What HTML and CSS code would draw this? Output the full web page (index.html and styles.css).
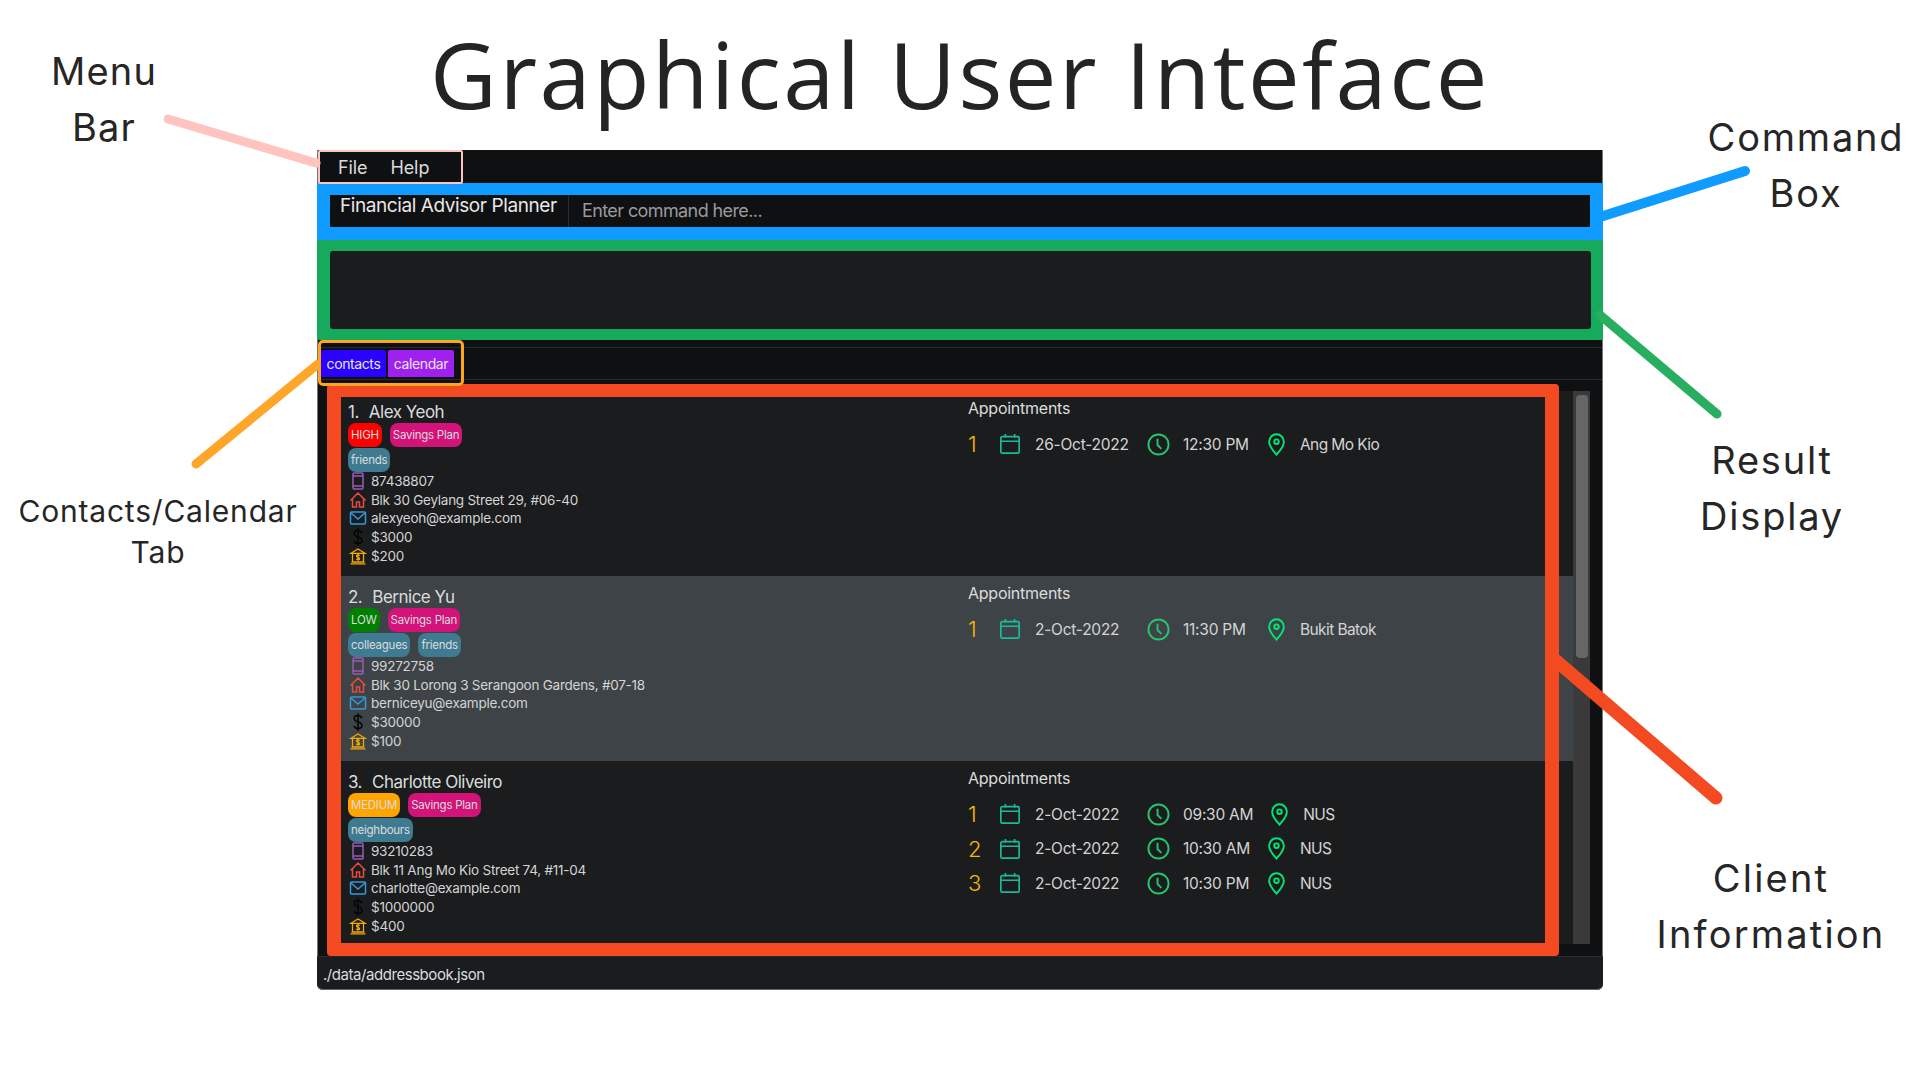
FILE: index.html
```html
<!DOCTYPE html>
<html lang="en">
<head>
    <meta charset="UTF-8">
    <meta name="viewport" content="width=device-width, initial-scale=1.0">
    <title>Graphical User Inteface</title>
    <link rel="stylesheet" href="styles.css">
</head>
<body>
    <svg class="defs" width="0" height="0">
        <symbol id="i-phone" viewBox="0 0 18 18"><rect x="4" y="1" width="10" height="16" rx="1"/><path d="M4 4h10M4 14h10"/></symbol>
        <symbol id="i-house" viewBox="0 0 18 18"><path d="M1.5 9.5 9 2l7.5 7.5M3.5 7.5V16h4v-5h3v5h4V7.5"/></symbol>
        <symbol id="i-mail" viewBox="0 0 18 18"><rect x="1.5" y="3" width="15" height="12" rx="1"/><path d="M2 4l7 6 7-6"/></symbol>
        <symbol id="i-dollar" viewBox="0 0 18 18"><path d="M12.8 5.2C12.2 3.3 10.8 2.6 9 2.6 6.6 2.6 5.2 3.8 5.2 5.6c0 4.4 7.8 2.4 7.8 7 0 1.9-1.6 2.9-4 2.9-2 0-3.4-1-4-2.6M9 .3v17.4"/></symbol>
        <symbol id="i-bank" viewBox="0 0 18 18"><path d="M2 6.3 9 2l7 4.3zM3.5 6.5V15M14.5 6.5V15M2.5 15h13M1.5 16.8h15M10.7 8.6C10.3 8 9.7 7.9 9 7.9c-1 0-1.6.5-1.6 1.2 0 1.6 3.2.9 3.2 2.6 0 .7-.7 1.1-1.6 1.1-.8 0-1.4-.3-1.7-1M9 7v6.8"/></symbol>
        <symbol id="i-cal" viewBox="0 0 24 24"><rect x="2" y="4" width="20" height="18" rx="1.5"/><path d="M2 9h20M7 1v4M17 1v4"/></symbol>
        <symbol id="i-clock" viewBox="0 0 24 24"><circle cx="12" cy="12" r="10.5"/><path d="M11 6v6.5l4 4"/></symbol>
        <symbol id="i-pin" viewBox="0 0 18 24"><path d="M9 1.2a7.8 7.8 0 0 1 7.8 7.8C16.8 14 9 22.8 9 22.8S1.2 14 1.2 9A7.8 7.8 0 0 1 9 1.2z"/><circle class="dot" cx="9" cy="9" r="2.4"/></symbol>
    </svg>

    <h1 class="page-title">Graphical User Inteface</h1>

    <div class="app">
        <div class="menubar">
            <div class="menu-frame">
                <span>File</span>
                <span>Help</span>
            </div>
        </div>

        <div class="command-band">
            <div class="command-box">
                <div class="app-name">Financial Advisor Planner</div>
                <div class="command-input">Enter command here...</div>
            </div>
        </div>

        <div class="result-band">
            <div class="result-display"></div>
        </div>

        <div class="tabbar">
            <div class="tab-strip"></div>
            <div class="tab-frame">
                <div class="tab tab-contacts">contacts</div>
                <div class="tab tab-calendar">calendar</div>
            </div>
        </div>

        <div class="list-area">
            <div class="client-list">
                <div class="client">
                    <div class="client-info">
                        <div class="client-name"><span class="client-index">1.</span>Alex Yeoh</div>
                        <div class="tags">
                            <span class="tag tag-high">HIGH</span>
                            <span class="tag tag-plan">Savings Plan</span>
                        </div>
                        <div class="tags">
                            <span class="tag tag-group">friends</span>
                        </div>
                        <div class="detail"><svg class="ic ic-phone"><use href="#i-phone"/></svg>87438807</div>
                        <div class="detail"><svg class="ic ic-house"><use href="#i-house"/></svg>Blk 30 Geylang Street 29, #06-40</div>
                        <div class="detail"><svg class="ic ic-mail"><use href="#i-mail"/></svg>alexyeoh@example.com</div>
                        <div class="detail"><svg class="ic ic-dollar"><use href="#i-dollar"/></svg>$3000</div>
                        <div class="detail"><svg class="ic ic-bank"><use href="#i-bank"/></svg>$200</div>
                    </div>
                    <div class="appts">
                        <div class="appts-title">Appointments</div>
                        <div class="appt">
                            <span class="appt-no">1</span>
                            <svg class="ic-cal"><use href="#i-cal"/></svg>
                            <span class="appt-date">26-Oct-2022</span>
                            <svg class="ic-clock"><use href="#i-clock"/></svg>
                            <span class="appt-time">12:30 PM</span>
                            <svg class="ic-pin"><use href="#i-pin"/></svg>
                            <span class="appt-place">Ang Mo Kio</span>
                        </div>
                    </div>
                </div>

                <div class="client client-alt">
                    <div class="client-info">
                        <div class="client-name"><span class="client-index">2.</span>Bernice Yu</div>
                        <div class="tags">
                            <span class="tag tag-low">LOW</span>
                            <span class="tag tag-plan">Savings Plan</span>
                        </div>
                        <div class="tags">
                            <span class="tag tag-group">colleagues</span>
                            <span class="tag tag-group">friends</span>
                        </div>
                        <div class="detail"><svg class="ic ic-phone"><use href="#i-phone"/></svg>99272758</div>
                        <div class="detail"><svg class="ic ic-house"><use href="#i-house"/></svg>Blk 30 Lorong 3 Serangoon Gardens, #07-18</div>
                        <div class="detail"><svg class="ic ic-mail"><use href="#i-mail"/></svg>berniceyu@example.com</div>
                        <div class="detail"><svg class="ic ic-dollar"><use href="#i-dollar"/></svg>$30000</div>
                        <div class="detail"><svg class="ic ic-bank"><use href="#i-bank"/></svg>$100</div>
                    </div>
                    <div class="appts">
                        <div class="appts-title">Appointments</div>
                        <div class="appt">
                            <span class="appt-no">1</span>
                            <svg class="ic-cal"><use href="#i-cal"/></svg>
                            <span class="appt-date">2-Oct-2022</span>
                            <svg class="ic-clock"><use href="#i-clock"/></svg>
                            <span class="appt-time">11:30 PM</span>
                            <svg class="ic-pin"><use href="#i-pin"/></svg>
                            <span class="appt-place">Bukit Batok</span>
                        </div>
                    </div>
                </div>

                <div class="client client-last">
                    <div class="client-info">
                        <div class="client-name"><span class="client-index">3.</span>Charlotte Oliveiro</div>
                        <div class="tags">
                            <span class="tag tag-medium">MEDIUM</span>
                            <span class="tag tag-plan">Savings Plan</span>
                        </div>
                        <div class="tags">
                            <span class="tag tag-group">neighbours</span>
                        </div>
                        <div class="detail"><svg class="ic ic-phone"><use href="#i-phone"/></svg>93210283</div>
                        <div class="detail"><svg class="ic ic-house"><use href="#i-house"/></svg>Blk 11 Ang Mo Kio Street 74, #11-04</div>
                        <div class="detail"><svg class="ic ic-mail"><use href="#i-mail"/></svg>charlotte@example.com</div>
                        <div class="detail"><svg class="ic ic-dollar"><use href="#i-dollar"/></svg>$1000000</div>
                        <div class="detail"><svg class="ic ic-bank"><use href="#i-bank"/></svg>$400</div>
                    </div>
                    <div class="appts">
                        <div class="appts-title">Appointments</div>
                        <div class="appt">
                            <span class="appt-no">1</span>
                            <svg class="ic-cal"><use href="#i-cal"/></svg>
                            <span class="appt-date">2-Oct-2022</span>
                            <svg class="ic-clock"><use href="#i-clock"/></svg>
                            <span class="appt-time">09:30 AM</span>
                            <svg class="ic-pin"><use href="#i-pin"/></svg>
                            <span class="appt-place">NUS</span>
                        </div>
                        <div class="appt">
                            <span class="appt-no">2</span>
                            <svg class="ic-cal"><use href="#i-cal"/></svg>
                            <span class="appt-date">2-Oct-2022</span>
                            <svg class="ic-clock"><use href="#i-clock"/></svg>
                            <span class="appt-time">10:30 AM</span>
                            <svg class="ic-pin"><use href="#i-pin"/></svg>
                            <span class="appt-place">NUS</span>
                        </div>
                        <div class="appt">
                            <span class="appt-no">3</span>
                            <svg class="ic-cal"><use href="#i-cal"/></svg>
                            <span class="appt-date">2-Oct-2022</span>
                            <svg class="ic-clock"><use href="#i-clock"/></svg>
                            <span class="appt-time">10:30 PM</span>
                            <svg class="ic-pin"><use href="#i-pin"/></svg>
                            <span class="appt-place">NUS</span>
                        </div>
                    </div>
                </div>
            </div>

            <div class="scrollbar">
                <div class="scroll-thumb"></div>
            </div>

            <div class="client-frame"></div>
        </div>

        <div class="statusbar">./data/addressbook.json</div>
    </div>

    <!-- callout lines and labels around the window -->
    <svg class="callouts" viewBox="0 0 1920 1080">
        <line class="line-menu" x1="168" y1="119" x2="316" y2="163"/>
        <line class="line-command" x1="1600" y1="217" x2="1745" y2="171"/>
        <line class="line-result" x1="1600" y1="315" x2="1717" y2="414"/>
        <line class="line-tab" x1="196" y1="464" x2="318" y2="364"/>
        <line class="line-client" x1="1553" y1="658" x2="1716" y2="798"/>
    </svg>

    <div class="label label-menu">Menu<br>Bar</div>
    <div class="label label-command">Command<br>Box</div>
    <div class="label label-result">Result<br>Display</div>
    <div class="label label-tab">Contacts/Calendar<br>Tab</div>
    <div class="label label-client">Client<br>Information</div>
</body>
</html>
```

FILE: styles.css
```css
*, *::before, *::after {
    box-sizing: border-box;
}

html, body {
    margin: 0;
    height: 1080px;
    overflow: hidden;
    background-color: #fff;
}

body {
    position: relative;
    font-family: "Inter", "Liberation Sans", sans-serif;
    color: #dcdcdc;
}

.defs {
    position: absolute;
}

.page-title {
    height: 150px;
    margin: 0;
    padding-top: 14px;
    text-align: center;
    font: 400 92px/120px "Open Sans", sans-serif;
    letter-spacing: 2.5px;
    color: #242424;
}

/* window */
.app {
    position: relative;
    display: flex;
    flex-direction: column;
    width: 1286px;
    height: 840px;
    margin-left: 317px;
    background-color: #0f1012;
    box-shadow: inset 1px 0 #777, inset -1px 0 #777;
    border-radius: 0 0 6px 6px;
}

.menubar {
    height: 33px;
    padding-left: 1px;
}

.menu-frame {
    display: flex;
    align-items: center;
    gap: 23px;
    width: 145px;
    height: 34px;
    padding-left: 18px;
    border: 2px solid #ffc4bf;
    border-radius: 2px;
    font-size: 18px;
    letter-spacing: -0.1px;
    position: relative;
}

.command-band {
    width: 1286px;
    height: 57px;
    padding: 12px 13px 13px;
    background-color: #0f9bff;
}

.command-box {
    display: flex;
    height: 32px;
    background-color: #0f1012;
    font-size: 18px;
}

.app-name {
    width: 239px;
    padding-left: 10px;
    border-right: 1px solid #2b2b2b;
    color: #e8e8e8;
    font-size: 19px;
    line-height: 22px;
    letter-spacing: -0.42px;
    white-space: nowrap;
}

.command-input {
    flex: 1;
    padding-left: 13px;
    line-height: 32px;
    letter-spacing: -0.6px;
    color: #9a9a9a;
}

.result-band {
    height: 100px;
    padding: 11px 12px 11px 13px;
    background-color: #16ab5c;
    border-radius: 0 0 2px 2px;
}

.result-display {
    height: 78px;
    background-color: #1b1c1e;
    border-radius: 3px;
}

.tabbar {
    position: relative;
    z-index: 1;
    height: 44px;
    padding-top: 7px;
}

.tab-strip {
    height: 33px;
    border-block: 1px solid #2a2a2c;
    margin-inline: 1px;
}

.tab-frame {
    position: absolute;
    top: 0;
    left: 1px;
    display: flex;
    gap: 2px;
    width: 146px;
    height: 46px;
    padding: 7px 0 0;
    border: 3px solid #ffa51f;
    border-radius: 5px;
}

.tab {
    width: 65px;
    height: 27px;
    border-radius: 2px 2px 0 0;
    color: #e6e6e6;
    font-size: 14px;
    letter-spacing: -0.4px;
    line-height: 27px;
    text-align: center;
}

.tab-contacts {
    background-color: #2a00ff;
}

.tab-calendar {
    width: 66px;
    background-color: #a020f0;
}

/* client list */
.list-area {
    position: relative;
    display: flex;
    flex: 1;
    padding: 7px 13px 12px 10px;
    min-height: 0;
}

.client-list {
    flex: 1;
    overflow: hidden;
}

.client {
    display: flex;
    height: 185px;
    padding: 10px 0 0 21px;
    background-color: #1b1c1e;
}

.client-alt {
    background-color: #3e4347;
}

.client-last {
    height: 183px;
}

.client-info {
    width: 620px;
}

.client-name {
    height: 22px;
    font-size: 17px;
    line-height: 22px;
    letter-spacing: -0.5px;
}

.client-index {
    margin-right: 10px;
}

.tags {
    display: flex;
    gap: 8px;
    height: 24px;
    margin-bottom: 1px;
}

.tags + .tags {
    margin-bottom: -0.5px;
}

.tag {
    height: 24px;
    padding-inline: 3px;
    border-radius: 8px;
    font-size: 11.5px;
    line-height: 24px;
    letter-spacing: -0.25px;
}

.tag-high {
    background-color: #ff0000;
}

.tag-low {
    background-color: #008000;
}

.tag-medium {
    background-color: #ffa500;
}

.tag-plan {
    background-color: #d3137a;
}

.tag-group {
    background-color: #3e7b91;
}

.detail {
    display: flex;
    align-items: center;
    gap: 4px;
    height: 18.8px;
    padding-left: 1px;
    color: #d4d4d4;
    font-size: 13.5px;
    letter-spacing: -0.25px;
    white-space: nowrap;
}

.ic {
    flex: none;
    width: 18px;
    height: 18px;
    fill: none;
    stroke-width: 1.5;
}

.ic-phone {
    stroke: #9b59b6;
}

.ic-house {
    stroke: #e74c3c;
}

.ic-mail {
    stroke: #3498db;
}

.ic-dollar {
    stroke: #050505;
}

.ic-bank {
    stroke: #f1a80a;
    stroke-width: 1.3;
}

.appts-title {
    height: 26px;
    font-size: 16px;
    line-height: 14px;
    letter-spacing: -0.25px;
}

.appt {
    display: flex;
    align-items: center;
    height: 34.5px;
    color: #d4d4d4;
    font-size: 15.5px;
    letter-spacing: -0.25px;
    white-space: nowrap;
}

.appt-no {
    width: 31px;
    color: #f5b800;
    font-size: 22px;
    font-weight: 300;
}

.ic-cal,
.ic-clock,
.ic-pin {
    flex: none;
    fill: none;
}

.ic-cal {
    width: 22px;
    height: 22px;
    margin-right: 14px;
    stroke: #1abc9c;
    stroke-width: 1.8;
}

.appt-date {
    width: 112px;
}

.ic-clock {
    width: 23px;
    height: 23px;
    margin-right: 13px;
    stroke: #26c46c;
    stroke-width: 2;
}

.appt-time {
    min-width: 67px;
    margin-right: 18px;
}

.ic-pin {
    width: 17px;
    height: 23px;
    margin-right: 15px;
    stroke: #00e676;
    stroke-width: 2;
}

.ic-pin .dot {
    fill: #00e676;
}

.appt-place {
    letter-spacing: -0.6px;
}

.scrollbar {
    flex: none;
    width: 17px;
    padding: 4px 2px 0 3px;
    background-color: #3a3a3a;
}

.scroll-thumb {
    height: 263px;
    background-color: #666;
    border-radius: 4px;
}

.client-frame {
    position: absolute;
    top: 0;
    left: 10px;
    width: 1232px;
    height: 572px;
    border: solid #f44a22;
    border-width: 13px 14px;
    border-radius: 4px;
}

.statusbar {
    height: 34px;
    padding-left: 6px;
    background-color: #1a1d20;
    border-top: 1px solid #2a2a2c;
    border-bottom: 1px solid #666;
    border-radius: 0 0 6px 6px;
    font-size: 15px;
    line-height: 36px;
    letter-spacing: -0.45px;
}

/* callouts */
.callouts {
    position: absolute;
    top: 0;
    left: 0;
    width: 1920px;
    height: 1080px;
    fill: none;
    stroke-linecap: round;
}

.line-menu {
    stroke: #ffc4bf;
    stroke-width: 9;
}

.line-command {
    stroke: #0f9bff;
    stroke-width: 10;
}

.line-result {
    stroke: #27ae60;
    stroke-width: 9;
}

.line-tab {
    stroke: #ffa529;
    stroke-width: 9;
}

.line-client {
    stroke: #f44a22;
    stroke-width: 13;
}

.label {
    position: absolute;
    color: #262626;
    font-size: 38px;
    line-height: 56px;
    letter-spacing: 1.8px;
    text-align: center;
    white-space: nowrap;
    transform: translateX(-50%);
}

.label-menu {
    top: 43px;
    left: 104px;
    letter-spacing: 1.2px;
}

.label-command {
    top: 109px;
    left: 1806px;
}

.label-result {
    top: 432px;
    left: 1772px;
}

.label-tab {
    top: 491px;
    left: 158px;
    font-size: 30px;
    line-height: 41px;
    letter-spacing: 0.8px;
}

.label-client {
    top: 850px;
    left: 1771px;
    letter-spacing: 2.2px;
}
```
